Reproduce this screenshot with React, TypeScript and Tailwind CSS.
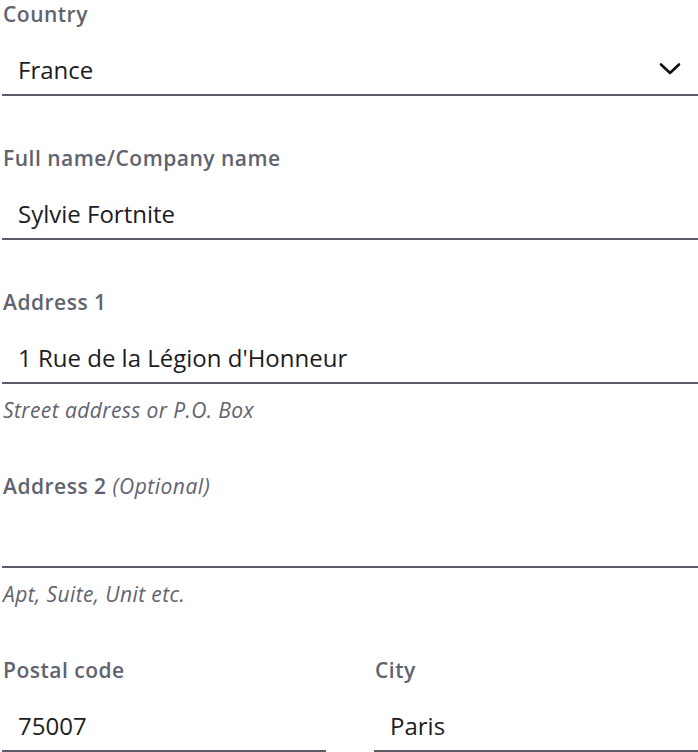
import React from 'react';

type FieldProps = {
  label: string;
  optional?: boolean;
  value?: string;
  helper?: string;
  select?: boolean;
  className?: string;
};

const Field: React.FC<FieldProps> = ({ label, optional, value, helper, select, className = '' }) => {
  return (
    <div className={`flex flex-col ${className}`}>
      <label className="h-[30px] leading-[29px] text-[21px] font-semibold tracking-[0.5px] text-[#5f6370] pl-px">
        {label}
        {optional && <span className="font-normal italic"> (Optional)</span>}
      </label>
      <div className="flex items-center justify-between pt-6 pb-2 pl-4 pr-[17px] border-b-2 border-[#5c5f69]">
        <span className="h-8 leading-8 text-[24px] text-[#1c1c1e]">{value}</span>
        {select && (
          <svg width="22" height="14" viewBox="0 0 22 14" fill="none" className="mt-[-2px]">
            <path d="M2 2.5 L11 11 L20 2.5" stroke="#111" strokeWidth="2.6" strokeLinecap="round" strokeLinejoin="round" />
          </svg>
        )}
      </div>
      {helper && (
        <div className="h-10 pt-[14px] leading-6 text-[21px] italic tracking-[0.4px] text-[#5f6370] pl-px">{helper}</div>
      )}
    </div>
  );
};

export default function App() {
  return (
    <div className="w-[698px] h-[752px] overflow-hidden bg-white pl-[2px]" style={{ fontFamily: '"Open Sans", sans-serif' }}>
      <form className="flex flex-col gap-12">
        <Field label="Country" value="France" select />
        <Field label="Full name/Company name" value="Sylvie Fortnite" />
        <Field label="Address 1" value="1 Rue de la Légion d'Honneur" helper="Street address or P.O. Box" />
        <Field label="Address 2" optional value="" helper="Apt, Suite, Unit etc." />
        <div className="grid grid-cols-2 gap-12">
          <Field label="Postal code" value="75007" />
          <Field label="City" value="Paris" />
        </div>
      </form>
    </div>
  );
}
